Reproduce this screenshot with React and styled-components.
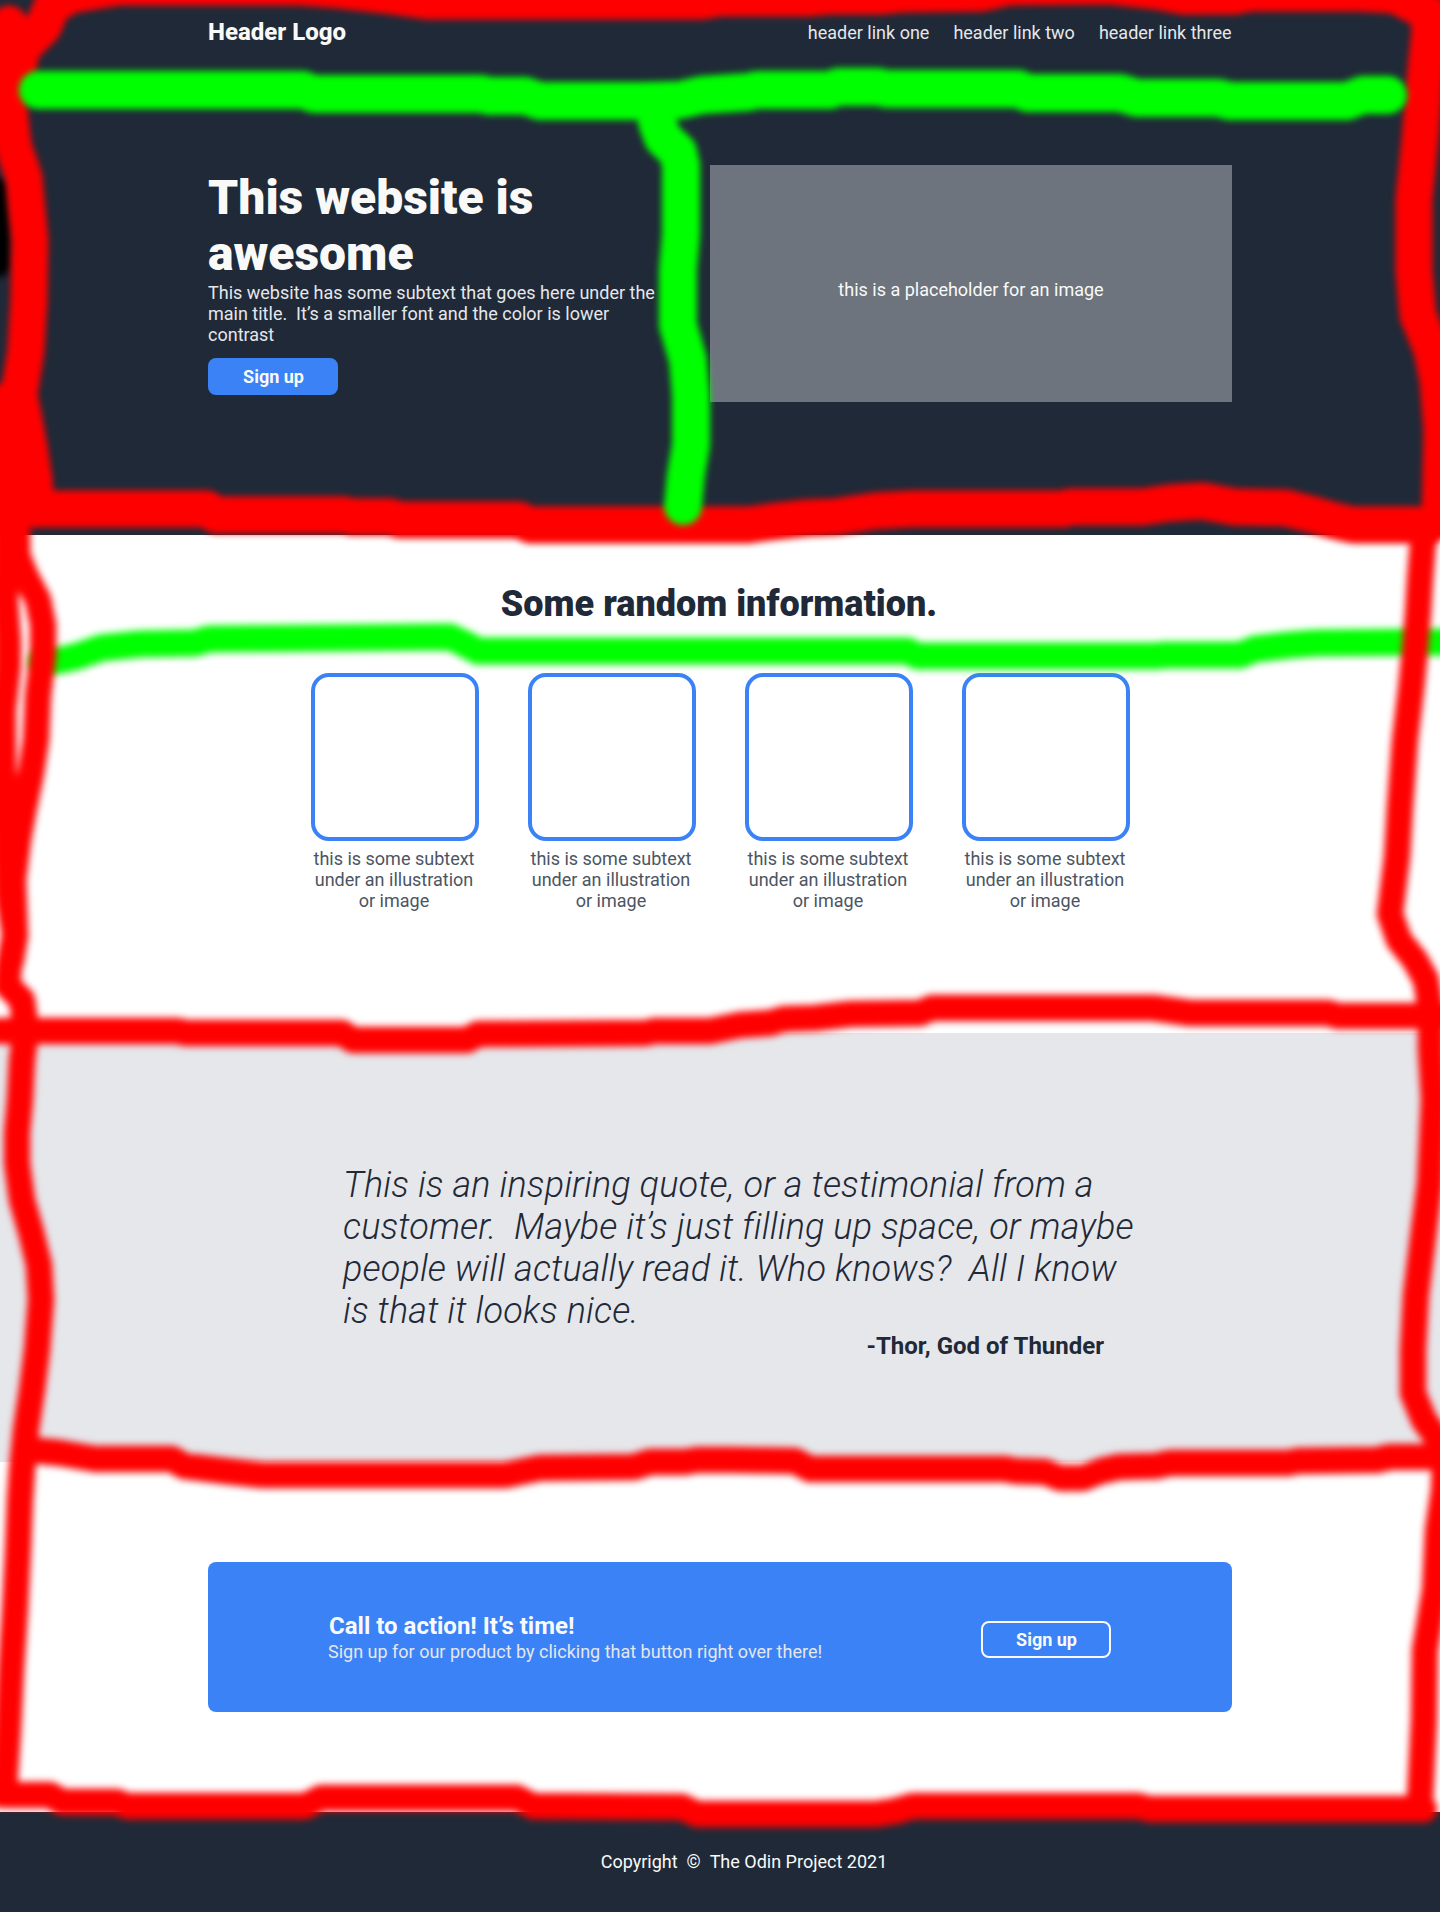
import React from "react";
import styled, { createGlobalStyle } from "styled-components";

const GlobalStyle = createGlobalStyle`
  * { box-sizing: border-box; }
  body { margin: 0; background: #fff; }
  h1, h2, h3, p, blockquote { margin: 0; }
`;

const Page = styled.div`
  position: relative;
  width: 1440px;
  height: 1912px;
  overflow: hidden;
  font-family: Roboto, "Liberation Sans", sans-serif;
  font-size: 18px;
  line-height: 21px;
  color: #1f2937;
`;

const Hero = styled.section`
  height: 535px;
  padding: 18px 208px 0;
  background: #1f2937;
`;

const Header = styled.header`
  display: flex;
  justify-content: space-between;
  align-items: flex-start;
`;

const Logo = styled.div`
  font-size: 24px;
  line-height: 28px;
  font-weight: 800;
  color: #f9faf8;
`;

const Nav = styled.nav`
  display: flex;
  gap: 24px;
  padding: 4px 0.5px 0 0;
`;

const NavLink = styled.a`
  color: #e5e7eb;
`;

const HeroBody = styled.div`
  display: flex;
  justify-content: space-between;
  align-items: flex-start;
  padding-top: 119px;
`;

const HeroCopy = styled.div`
  width: 460px;
  padding-top: 5px;
`;

const HeroTitle = styled.h1`
  font-size: 48px;
  line-height: 56px;
  font-weight: 900;
  color: #f9faf8;
`;

const HeroText = styled.p`
  color: #e5e7eb;
  white-space: pre-line;
`;

const Button = styled.button`
  display: block;
  width: 130px;
  height: 37px;
  padding: 0 0 0 1px;
  border: 2px solid ${(p) => (p.$outlined ? "#f9faf8" : "#3b82f6")};
  border-radius: 8px;
  background: #3b82f6;
  color: #f9faf8;
  font: 700 18px/21px Roboto, "Liberation Sans", sans-serif;
  margin-top: ${(p) => p.$top}px;
`;

const Placeholder = styled.div`
  width: 522px;
  height: 237px;
  padding-top: 114px;
  background: #6d747d;
  color: #f9faf8;
  text-align: center;
`;

const Info = styled.section`
  height: 498px;
  padding-top: 48px;
  text-align: center;
`;

const InfoTitle = styled.h2`
  font-size: 36px;
  line-height: 42px;
  font-weight: 900;
  padding-right: 2px;
`;

const Cards = styled.div`
  display: flex;
  justify-content: center;
  gap: 49px;
  padding: 48px 0 0 1px;
`;

const Card = styled.div`
  width: 168px;
  color: #4b5563;
`;

const Frame = styled.div`
  height: 168px;
  margin-bottom: 7px;
  border: 4px solid #3b82f6;
  border-radius: 18px;
`;

const CardText = styled.p`
  padding-right: 2px;
`;

const Testimonial = styled.section`
  height: 429px;
  padding: 131px 0 0 343px;
  background: #e5e7eb;
`;

const Quote = styled.blockquote`
  width: 800px;
  font-size: 36px;
  line-height: 42px;
  font-weight: 300;
  font-style: italic;
  letter-spacing: 0.13px;
  font-variant-ligatures: common-ligatures;
`;

const Author = styled.p`
  width: 761px;
  font-size: 24px;
  line-height: 28px;
  font-weight: 700;
  text-align: right;
`;

const Action = styled.section`
  height: 350px;
  padding: 100px 208px;
`;

const Banner = styled.div`
  display: flex;
  justify-content: space-between;
  align-items: flex-start;
  height: 150px;
  padding: 50px 121px 0 120px;
  border-radius: 8px;
  background: #3b82f6;
`;

const BannerTitle = styled.h3`
  font-size: 24px;
  line-height: 28px;
  padding-left: 1px;
  margin-bottom: 1px;
  font-weight: 700;
  color: #f9faf8;
`;

const BannerText = styled.p`
  color: #e5e7eb;
`;

const Footer = styled.footer`
  display: flex;
  justify-content: center;
  height: 100px;
  padding: 39px 0 0 48px;
  background: #1f2937;
  color: #f9faf8;
`;

const Markup = styled.svg`
  position: absolute;
  inset: 0;
  pointer-events: none;
  fill: none;
  stroke-linecap: round;
  stroke-linejoin: round;
`;

const RED = "#ff0000";
const GREEN = "#00ff00";

const shadowStroke = "-4,190 -2,230 -2,264";

const heroRed = [
  "9,24 9,60 9,110 13,145 24,178 27,210 30,240 29,300 26,350 19,395 24,420 29,447 34,480 36,509",
  "8,400 8,515",
  "18,67 22,48 43,27 52,6 70,-5 100,-10 120,-13 300,-13 340,-10 385,-5 427,1 702,1 720,-2 807,-2 830,-4 881,-4 900,-6 982,-7 1009,-13 1110,-14 1156,-9 1184,-4 1234,-4 1250,-7 1360,-7 1395,-5 1428,12 1430,30 1425,80 1420,140 1414,200 1414,270 1418,315 1432,350 1438,380 1442,430 1440,520",
  "20,509 207,509 216,515 344,515 352,517 390,517 400,520 519,520 530,525 748,525 770,522 807,518 835,517 875,511 913,509 1064,509 1070,507 1142,507 1170,503 1202,501 1235,507 1285,508 1310,514 1335,521 1353,525 1430,525",
];

const heroGreen = [
  "38,90 303,90 314,94 480,94 490,96 525,96 540,101 643,101 680,100 702,95 748,92 757,90 830,90 838,87 878,87 887,89 1018,89 1028,93 1120,93 1137,98 1218,98 1230,101 1347,101 1363,95 1388,95",
  "657,122 663,138 678,152 681,165 681,235 678,270 678,325 688,360 691,395 691,445 686,475 683,506",
];

const lowerGreen = [
  "42,661 55,661 75,657 101,648 140,644 195,643 209,639 450,637 465,644 478,651 908,651 917,656 1156,656 1165,655 1240,655 1255,649 1290,645 1317,643 1445,642",
];

const lowerRed = [
  "17,520 17,555 25,575 38,600 43,625 43,655 38,695 36,740 31,773 24,807 18,840 13,880 15,935 11,960",
  "7,520 5,600 8,640 8,665 3,710 3,770 5,800 6,850 8,895 15,935 9,965 7,985 22,1000 26,1030 22,1060 20,1100 17,1133 17,1163 22,1200 31,1232 39,1265 41,1300 37,1350 32,1390 26,1430 22,1470 20,1500 18,1550 15,1610 11,1670 8,1730 4,1790",
  "0,1031 177,1031 186,1033 342,1033 353,1040 467,1040 478,1034 646,1033 654,1031 710,1031 740,1025 770,1023 784,1019 815,1018 850,1014 920,1013 932,1008 1153,1008 1190,1013 1328,1013 1338,1016 1440,1016",
  "1424,530 1420,580 1418,613 1415,650 1411,690 1405,740 1400,807 1397,857 1390,914 1399,940 1415,960 1426,980 1431,1010 1431,1050 1434,1100 1430,1183 1424,1230 1416,1295 1413,1350 1413,1393 1424,1420 1440,1442",
  "1445,1460 1444,1490 1438,1530 1435,1590 1425,1650 1424,1720 1420,1800",
  "30,1450 60,1453 95,1459 172,1459 184,1466 225,1471 262,1475 505,1475 540,1468 634,1467 650,1462 685,1462 697,1460 732,1460 795,1461 810,1469 1005,1469 1015,1471 1045,1472 1060,1478 1083,1478 1101,1471 1119,1467 1156,1466 1170,1463 1289,1463 1297,1461 1377,1460 1390,1457 1445,1457",
  "2,1795 50,1795 62,1802 117,1802 127,1806 305,1806 321,1798 517,1798 533,1806 682,1807 697,1814 875,1814 895,1811 913,1806 1138,1806 1150,1809 1424,1809",
];

function Strokes({ lines, color, width, blur }) {
  return (
    <g stroke={color} strokeWidth={width} filter={`url(#${blur})`}>
      {lines.map((points) => (
        <polyline key={points} points={points} />
      ))}
    </g>
  );
}

export default function App() {
  return (
    <Page>
      <GlobalStyle />
      <Hero>
        <Header>
          <Logo>Header Logo</Logo>
          <Nav>
            <NavLink>header link one</NavLink>
            <NavLink>header link two</NavLink>
            <NavLink>header link three</NavLink>
          </Nav>
        </Header>
        <HeroBody>
          <HeroCopy>
            <HeroTitle>This website is awesome</HeroTitle>
            <HeroText>
              {"This website has some subtext that goes here under the main title. \u00a0It’s a smaller font and the color is lower contrast"}
            </HeroText>
            <Button $top={13}>Sign up</Button>
          </HeroCopy>
          <Placeholder>this is a placeholder for an image</Placeholder>
        </HeroBody>
      </Hero>

      <Info>
        <InfoTitle>Some random information.</InfoTitle>
        <Cards>
          {[1, 2, 3, 4].map((n) => (
            <Card key={n}>
              <Frame />
              <CardText>this is some subtext under an illustration or image</CardText>
            </Card>
          ))}
        </Cards>
      </Info>

      <Testimonial>
        <Quote>
          {"This is an inspiring quote, or a testimonial from a customer. \u00a0Maybe it’s just filling up space, or maybe people will actually read it. Who knows? \u00a0All I know is that it looks nice."}
        </Quote>
        <Author>-Thor, God of Thunder</Author>
      </Testimonial>

      <Action>
        <Banner>
          <div>
            <BannerTitle>Call to action! It’s time!</BannerTitle>
            <BannerText>Sign up for our product by clicking that button right over there!</BannerText>
          </div>
          <Button $outlined $top={9}>Sign up</Button>
        </Banner>
      </Action>

      <Footer>{"Copyright \u00a0© \u00a0The Odin Project 2021"}</Footer>

      <Markup width="1440" height="1912" viewBox="0 0 1440 1912" aria-hidden="true">
        <defs>
          <filter id="soft" filterUnits="userSpaceOnUse" x="-60" y="-60" width="1560" height="2032">
            <feGaussianBlur stdDeviation="3" />
          </filter>
          <filter id="softer" filterUnits="userSpaceOnUse" x="-60" y="-60" width="1560" height="2032">
            <feGaussianBlur stdDeviation="3.6" />
          </filter>
        </defs>
        <Strokes lines={[shadowStroke]} color="#000000" width={26} blur="softer" />
        <Strokes lines={lowerGreen} color={GREEN} width={27} blur="softer" />
        <Strokes lines={lowerRed} color={RED} width={26.5} blur="softer" />
        <Strokes lines={heroRed} color={RED} width={37} blur="soft" />
        <Strokes lines={heroGreen} color={GREEN} width={38} blur="soft" />
      </Markup>
    </Page>
  );
}
